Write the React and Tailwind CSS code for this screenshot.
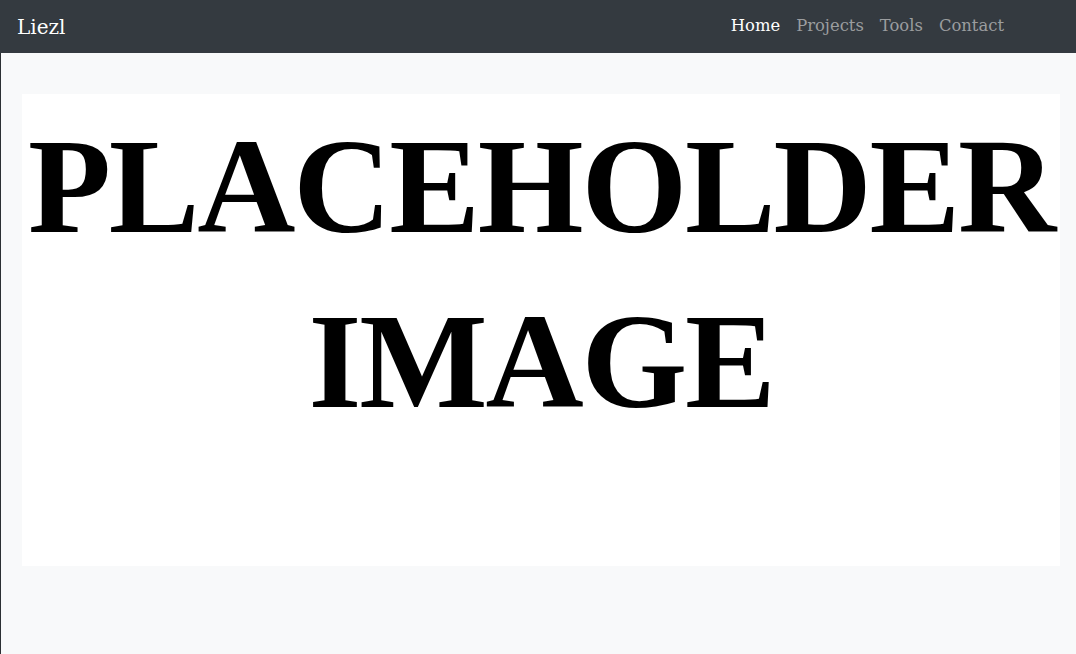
import React from "react";

const links = [
  { label: "Home", active: true },
  { label: "Projects" },
  { label: "Tools" },
  { label: "Contact" },
];

export default function App() {
  return (
    <div className="min-h-screen bg-[#f8f9fa] border-l border-[#2b2f33]">
      {/* Navbar */}
      <nav className="h-[53px] bg-[#343a40] flex items-center justify-between pl-[17px] pr-[64px] font-['DejaVu_Serif',serif] -ml-px">
        <a href="#" className="text-[20px] text-white leading-none">
          Liezl
        </a>
        <ul className="flex items-center">
          {links.map((l) => (
            <li key={l.label}>
              <a
                href="#"
                className={`block px-2 text-[16.4px] leading-none ${
                  l.active ? "text-white" : "text-[#9b9d9f]"
                }`}
              >
                {l.label}
              </a>
            </li>
          ))}
        </ul>
      </nav>

      {/* Placeholder image */}
      <div className="pt-[41px] pl-[21px] pr-[16px]">
        <div className="h-[472px] bg-white pt-[5px] text-center font-['Liberation_Serif',serif] font-bold text-black text-[136px] leading-[175px] tracking-[-2.2px]">
          PLACEHOLDER
          <br />
          IMAGE
        </div>
      </div>
    </div>
  );
}
